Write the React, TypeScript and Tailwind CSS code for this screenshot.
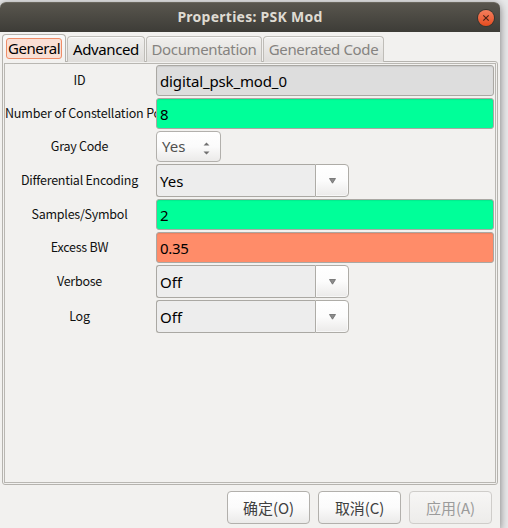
import React from "react";

const UI = "font-['Noto_Sans','Noto_Sans_CJK_SC',sans-serif]";
const CJK = "font-['Noto_Sans_CJK_SC',sans-serif]";

function Row({ label, height, children, align = "justify-center pr-[2px] tracking-[-0.25px]" }: { label: string; height: string; children: React.ReactNode; align?: string }) {
  return (
    <div className={`flex ${height}`}>
      <div className={`flex w-[151px] shrink-0 items-center overflow-hidden whitespace-nowrap pb-px text-[12.5px] leading-none text-[#111] ${CJK} ${align}`}>
        <span>{label}</span>
      </div>
      {children}
    </div>
  );
}

function Entry({ value, color, spacing = "" }: { value: string; color: string; spacing?: string }) {
  return (
    <div className={`flex h-[31px] w-[338px] items-center rounded-[3px] border border-[#aaa8a3] pl-[3px] pt-px text-[15px] leading-none text-black shadow-[inset_0_1px_1px_rgba(0,0,0,0.08)] ${color} ${spacing}`}>
      {value}
    </div>
  );
}

function Combo({ value }: { value: string }) {
  return (
    <div className="flex h-[33px] w-[193px]">
      <div className="flex w-[159px] items-center rounded-l-[3px] border border-r-0 border-[#aaa8a3] bg-[#ededed] pl-[3px] pt-px text-[15px] leading-none text-black">
        {value}
      </div>
      <div className="flex flex-1 items-center justify-center rounded-r-[4px] border border-[#aeaca7] bg-linear-to-b from-white via-[#fcfcfc] to-[#ebeae9] shadow-[inset_0_0_0_1px_rgba(255,255,255,0.6)]">
        <svg width="7" height="6" viewBox="0 0 7 6" className="mt-px ml-px">
          <path d="M0.5 0.5H6.5L3.5 5.2Z" fill="#8c8c8c" stroke="#696969" strokeWidth="0.8" />
        </svg>
      </div>
    </div>
  );
}

function Tab({ label, width, tone, spacing }: { label: string; width: string; tone: string; spacing: string }) {
  return (
    <div className={`mt-[2px] flex h-[26px] items-center justify-center whitespace-nowrap rounded-t-[4px] border border-b-0 border-[#bfbdb8] bg-linear-to-b from-[#f1f0ee] to-[#dfddda] text-[15px] leading-none shadow-[inset_0_1px_0_#fafafa] ${width} ${tone} ${spacing}`}>
      {label}
    </div>
  );
}

function DialogButton({ label, disabled = false }: { label: string; disabled?: boolean }) {
  return (
    <div
      className={`flex h-[33px] w-[83px] items-center justify-center rounded-[4px] border text-[15px] leading-none tracking-[-0.1px] ${CJK} ${
        disabled
          ? "border-[#cfcdca] bg-linear-to-b from-[#f7f6f5] to-[#edecea] text-[#9b9b9b]"
          : "border-[#b2b0ac] bg-linear-to-b from-white via-[#fbfbfb] to-[#ebeae9] text-[#404040]"
      }`}
    >
      {label}
    </div>
  );
}

export default function App() {
  return (
    <div className={`h-[528px] w-[508px] overflow-hidden bg-[#e9e9ea] pt-[2px] ${UI}`}>
      <div className="h-[526px] w-[500px] rounded-t-[6px] bg-[#f2f1ef] shadow-[0_2px_9px_rgba(0,0,0,0.5)]">
        <header className="flex h-[30px] items-center rounded-t-[6px] border-t border-[#6a675e] bg-linear-to-b from-[#59564e] to-[#3d3c37]">
          <h1 className="ml-[22px] flex-1 pb-px text-center text-[14px] leading-none font-bold tracking-[0.26px] text-[#dfdbd2]">Properties: PSK Mod</h1>
          <div className="mr-[6px] flex size-[16px] items-center justify-center rounded-full bg-linear-to-b from-[#f37e5c] to-[#e64b1c] shadow-[0_0_0_1px_#37352f]">
            <svg width="8" height="8" viewBox="0 0 8 8">
              <path d="M1.3 1.3L6.7 6.7M6.7 1.3L1.3 6.7" stroke="#4b2417" strokeWidth="1.2" />
            </svg>
          </div>
        </header>

        <nav className="flex h-[30px] pt-[2px] pl-[2px]">
          <div className="z-10 mr-px h-[28px] w-[64px] rounded-t-[4px] border border-b-0 border-[#b5b3ae] bg-linear-to-b from-[#fafafa] to-[#f2f1ef] px-[3px] pt-[3px]">
            <div className="flex h-[21px] w-[56px] items-center justify-center rounded-[3px] border border-[#ef8d68] bg-[#f9dfd4] text-[15px] leading-none tracking-[-0.45px] text-black">
              General
            </div>
          </div>
          <Tab label="Advanced" width="w-[78px] mr-px" tone="text-black" spacing="tracking-[-0.4px]" />
          <Tab label="Documentation" width="w-[116px] mr-px" tone="text-[#858380]" spacing="tracking-[-0.36px]" />
          <Tab label="Generated Code" width="w-[121px]" tone="text-[#858380]" spacing="tracking-[-0.37px]" />
        </nav>

        <div className="-mt-px ml-[2px] h-[424px] w-[496px] rounded-b-[3px] rounded-tr-[3px] border border-[#b5b3ae] p-px">
          <main className="flex h-full flex-col gap-[2px] border border-[#b9b7b2] pt-px">
            <Row label="ID" height="h-[31px]">
              <Entry value="digital_psk_mod_0" color="bg-[#dddddd]" spacing="tracking-[-0.14px]" />
            </Row>
            <Row label="Number of Constellation Points" height="h-[31px]" align="justify-start tracking-[-0.17px]">
              <Entry value="8" color="bg-[#00ff99]" />
            </Row>
            <Row label="Gray Code" height="h-[31px]">
              <div className="flex h-[31px] w-[65px] items-center justify-between rounded-[4px] border border-[#b2b0ac] bg-linear-to-b from-white via-[#fbfbfb] to-[#ebeae9] pr-[10px] pl-[5px] text-[15px] leading-none text-[#505050]">
                <span>Yes</span>
                <svg width="7" height="13" viewBox="0 0 7 13" className="mt-[3px]">
                  <path d="M0.5 3.5L3.5 0.5L6.5 3.5ZM0.5 9.5L3.5 12.5L6.5 9.5Z" fill="#707070" />
                </svg>
              </div>
            </Row>
            <Row label="Differential Encoding" height="h-[33px]">
              <Combo value="Yes" />
            </Row>
            <Row label="Samples/Symbol" height="h-[31px]">
              <Entry value="2" color="bg-[#00ff99]" />
            </Row>
            <Row label="Excess BW" height="h-[31px]">
              <Entry value="0.35" color="bg-[#ff8c69]" spacing="tracking-[-0.3px]" />
            </Row>
            <Row label="Verbose" height="h-[33px]">
              <Combo value="Off" />
            </Row>
            <Row label="Log" height="h-[33px]">
              <Combo value="Off" />
            </Row>
          </main>
        </div>

        <footer className="flex justify-end gap-2 pt-[6px] pr-[8px]">
          <DialogButton label="确定(O)" />
          <DialogButton label="取消(C)" />
          <DialogButton label="应用(A)" disabled />
        </footer>
      </div>
    </div>
  );
}
